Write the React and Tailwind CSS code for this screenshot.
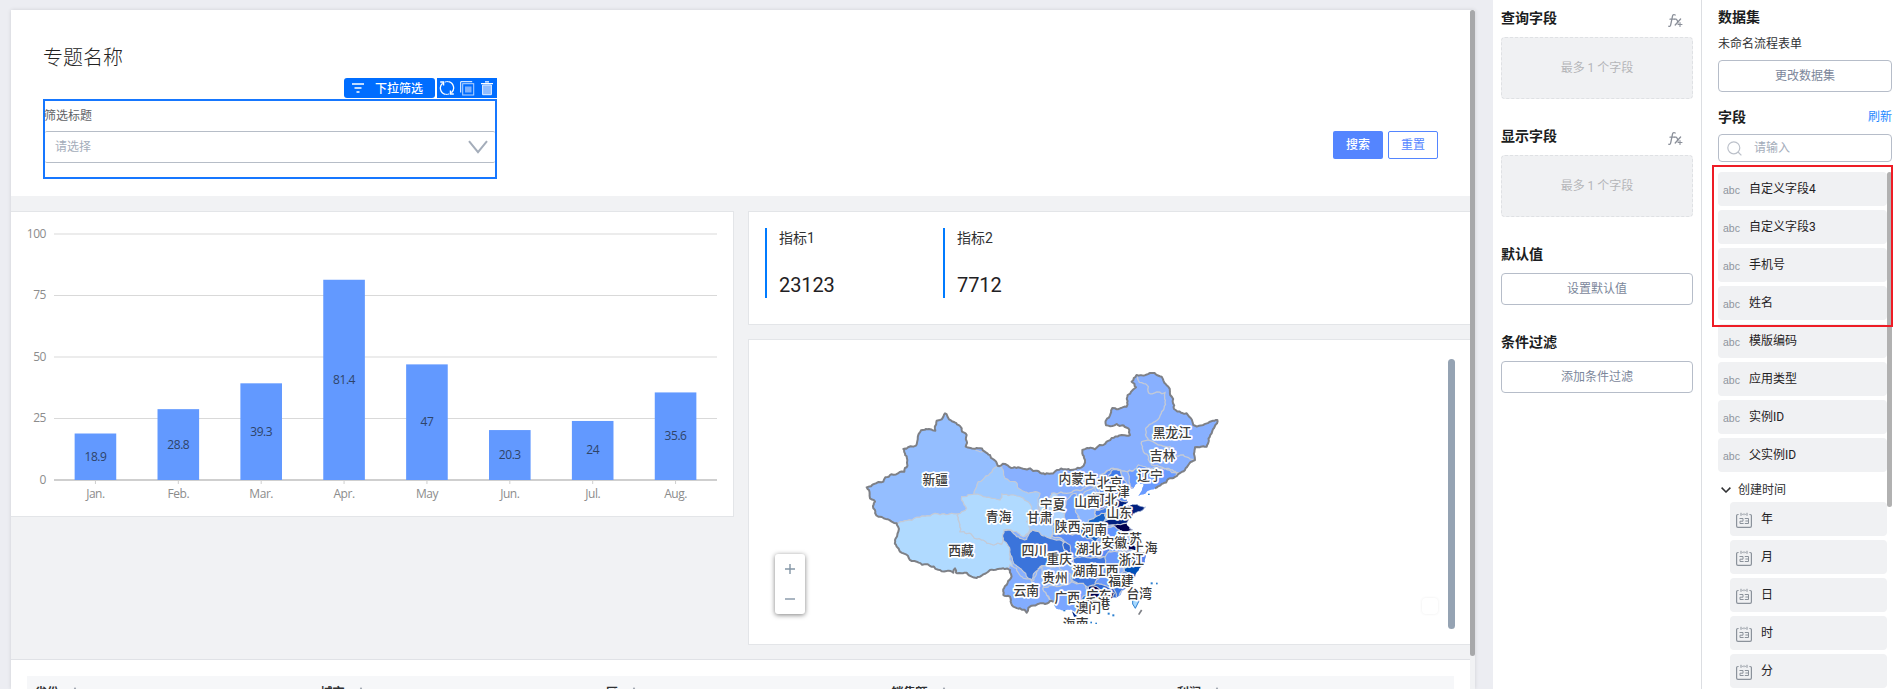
import React from "react";

/* ---------- chart ---------- */
const CHART = [
  ["Jan.", 18.9],
  ["Feb.", 28.8],
  ["Mar.", 39.3],
  ["Apr.", 81.4],
  ["May", 47],
  ["Jun.", 20.3],
  ["Jul.", 24],
  ["Aug.", 35.6],
];

function BarChart() {
  const left = 43;
  const right = 706;
  const zero = 268;
  const unit = 2.46;
  const step = (right - left) / CHART.length;
  return (
    <svg width="722" height="304" viewBox="0 0 722 304" className="block font-['Open_Sans','Noto_Sans',sans-serif] text-[12px] tracking-[-0.45px]">
      {[100, 75, 50, 25].map((v) => (
        <g key={v}>
          <line x1={left} x2={right} y1={zero - v * unit} y2={zero - v * unit} stroke="#d9d9d9" strokeWidth="1" />
        </g>
      ))}
      <line x1={left} x2={right} y1={zero} y2={zero} stroke="#cfcfcf" strokeWidth="2" />
      {[0, 25, 50, 75, 100].map((v) => (
        <text key={v} x="35" y={zero - v * unit + 3.5} textAnchor="end" fill="#8c8c8c">
          {v}
        </text>
      ))}
      {CHART.map(([m, v], i) => {
        const cx = left + step * (i + 0.5);
        return (
          <g key={m}>
            <line x1={cx} x2={cx} y1={zero} y2={zero + 4} stroke="#cfcfcf" />
            <rect x={cx - 20.8} y={zero - v * unit} width="41.6" height={v * unit} fill="#6299ff" />
            <text x={cx} y={zero - (v * unit) / 2 + 4} textAnchor="middle" fill="#2f4468">
              {v}
            </text>
            <text x={cx} y={zero + 18} textAnchor="middle" fill="#8c8c8c">
              {m}
            </text>
          </g>
        );
      })}
    </svg>
  );
}

/* ---------- map ---------- */
const hash = (x, y) => {
  const s = Math.sin(x * 12.9898 + y * 78.233) * 43758.5453;
  return (s - Math.floor(s)) * 2 - 1;
};

/* Midpoint displacement, independent of direction so that shared borders coincide. */
function subdivide(a, b, out) {
  const len = Math.hypot(b[0] - a[0], b[1] - a[1]);
  if (len < 9) {
    out.push(b);
    return;
  }
  const mx = (a[0] + b[0]) / 2;
  const my = (a[1] + b[1]) / 2;
  const k = Math.min(len * 0.18, 5);
  const m = [mx + hash(mx, my) * k, my + hash(my, mx) * k];
  subdivide(a, m, out);
  subdivide(m, b, out);
}

function rough(str, closed = true) {
  const pts = str.split(" ").map((p) => p.split(",").map(Number));
  const out = [pts[0]];
  for (let i = 1; i < pts.length; i++) subdivide(pts[i - 1], pts[i], out);
  if (closed) subdivide(pts[pts.length - 1], pts[0], out);
  return "M" + out.map((p) => p[0].toFixed(1) + "," + p[1].toFixed(1)).join("L") + (closed ? "Z" : "");
}

const LAND =
  "612,756 600,753 585,762 570,760 540,770 530,788 510,775 490,770 480,740 460,735 462,715 478,690 480,660 460,655 430,660 420,660 390,680 365,680 350,668 318,668 315,655 310,668 270,660 240,648 200,635 160,610 140,590 135,570 145,545 140,520 125,515 85,500 70,475 75,455 60,445 50,412 75,401 100,395 120,375 163,365 172,330 160,297 198,287 213,241 256,242 260,212 275,208 285,190 297,208 330,228 350,255 347,290 380,294 420,315 443,347 500,354 540,355 585,373 640,358 695,352 705,330 697,300 712,294 735,298 760,285 785,264 815,255 840,255 835,235 800,222 768,226 787,174 800,178 830,170 833,135 858,112 845,95 860,75 900,69 935,80 955,110 972,177 1010,190 1030,225 1060,225 1080,215 1102,210 1085,250 1070,290 1035,292 1035,330 1015,345 1005,360 985,372 960,385 940,400 915,415";
const COAST =
  " 890,425 865,438 880,402 865,395 850,415 835,415 825,440 835,455 820,470 850,463 888,470 870,485 850,492 830,520 850,540 855,575 875,600 888,615 885,640 868,655 852,685 830,712 800,742 775,750 740,748 700,765 685,790 670,783 625,778";

const PROVINCES = [
  ["#94beff", "443,347 420,370 385,395 372,432 335,440 350,475 325,492 250,492 200,502 165,512 140,520 20,540 20,180 300,170 360,260 347,290 420,315"],
  ["#b0daff", "140,520 165,512 200,502 250,492 325,492 330,545 370,560 430,585 455,582 462,560 480,600 487,650 480,700 300,720 100,620"],
  ["#9fcaff", "443,347 455,350 465,385 495,395 505,415 535,430 570,430 565,460 575,500 605,520 605,560 575,565 550,540 520,560 480,500 372,432 385,395 420,370"],
  ["#b0daff", "335,440 372,432 450,450 455,432 500,438 545,470 550,490 530,515 540,535 520,560 490,545 465,540 462,560 455,582 430,585 370,560 330,545 325,492 350,475"],
  ["#b0d5ff", "570,450 600,445 605,430 620,432 620,480 645,490 640,515 600,515 575,490"],
  ["#6f9ffb", "605,560 605,520 645,510 650,450 678,430 683,500 690,530 680,560 640,550"],
  ["#8ab5ff", "683,440 735,405 745,440 735,520 690,520 680,490"],
  ["#5b8df3", "750,375 790,355 812,362 830,400 835,460 765,500 740,500"],
  ["#3f7ae8", "775,378 792,358 812,360 815,385 790,392"],
  ["#3f7ae8", "735,480 765,470 765,500 740,510"],
  ["#1663c8", "722,508 765,490 760,525 735,545 750,560 740,585 690,562 700,530"],
  ["#012180", "760,515 780,503 800,450 830,455 850,463 888,470 870,485 850,492 830,520 800,525 780,525"],
  ["#01004f", "785,528 830,520 860,545 820,548 800,540"],
  ["#6296ff", "760,530 790,528 835,560 835,595 790,610 755,585"],
  ["#01004f", "835,580 860,585 865,600 835,600"],
  ["#5b8cf5", "605,555 680,552 750,575 780,600 770,625 670,625 640,570"],
  ["#3268d2", "645,575 660,585 665,620 650,640 630,650 600,650 620,620"],
  ["#3b74db", "462,540 475,540 500,560 530,568 547,540 575,556 600,565 640,575 645,600 620,620 600,650 570,650 545,690 530,680 510,655 490,640 480,600 460,565"],
  ["#3f77df", "668,625 760,620 800,625 800,650 740,690 735,715 690,710 665,690 672,650"],
  ["#6998fb", "775,605 830,600 810,650 800,690 760,720 735,712 740,690 765,650"],
  ["#5286ef", "805,605 890,600 895,640 820,660"],
  ["#0050b8", "822,655 880,645 850,690 820,672"],
  ["#3e79e4", "780,690 822,665 860,690 800,750 785,725"],
  ["#8fb8ff", "575,650 625,648 662,672 665,695 620,710 580,712 560,690"],
  ["#83adff", "480,645 500,655 520,685 545,695 560,665 575,650 580,712 590,735 612,756 530,800 440,740 470,690"],
  ["#7aa6ff", "580,712 620,710 665,695 700,700 715,725 685,800 620,800 610,760 590,735"],
  ["#2c66d4", "715,715 745,700 790,715 800,745 740,760 690,770"],
  ["#01004f", "715,712 740,710 775,725 745,750 718,742"],
  ["#01004f", "785,725 793,730 790,748 782,745"],
  ["#6a9bff", "833,365 850,362 865,345 925,355 990,370 950,410 862,445 840,410"],
];

const INNER = [
  "862,80 875,98 895,110 897,130 945,128 935,185 915,215 887,240 895,270 875,275 880,305 895,318",
  "895,270 925,285 960,290 975,320 1000,315 1035,330",
  "895,318 905,345 930,350 985,372",
  "620,432 650,430 700,415 745,402 750,375 790,355 812,362 833,365 850,362",
];

const LABELS = [
  ["黑龙江", 966, 246],
  ["吉林", 938, 316],
  ["辽宁", 900, 374],
  ["新疆", 256, 387],
  ["西藏", 333, 601],
  ["北京", 780, 395],
  ["天津", 801, 424],
  ["河北", 764, 448],
  ["内蒙古", 683, 383],
  ["山西", 711, 452],
  ["宁夏", 608, 461],
  ["甘肃", 569, 500],
  ["青海", 446, 499],
  ["山东", 808, 485],
  ["陕西", 653, 528],
  ["江苏", 838, 564],
  ["河南", 733, 538],
  ["上海", 884, 590],
  ["安徽", 793, 577],
  ["湖北", 716, 595],
  ["四川", 553, 601],
  ["重庆", 628, 623],
  ["浙江", 844, 627],
  ["江西", 767, 659],
  ["湖南", 706, 659],
  ["福建", 813, 690],
  ["贵州", 615, 680],
  ["云南", 529, 719],
  ["台湾", 868, 728],
  ["广西", 652, 741],
  ["广东", 746, 734],
  ["香港", 742, 760],
  ["澳门", 715, 770],
  ["海南", 677, 820],
];

function ChinaMap() {
  return (
    <svg width="400" height="274" viewBox="0 0 1200 822" className="block overflow-hidden font-['Noto_Sans_CJK_SC',sans-serif] text-[38.4px] font-medium">
      <defs>
        <clipPath id="land">
          <path d={rough(LAND + COAST)} />
        </clipPath>
      </defs>
      <path d={rough(LAND + COAST)} fill="#88b0ff" />
      <g clipPath="url(#land)">
        {PROVINCES.map(([c, p], i) => (
          <path key={i} d={rough(p)} fill={c} stroke="#c4cad6" strokeWidth="3.5" />
        ))}
        {INNER.map((p) => (
          <path key={p} d={rough(p, false)} fill="none" stroke="#c4cad6" strokeWidth="4" />
        ))}
      </g>
      <path d={rough(LAND, false)} fill="none" stroke="#7e8086" strokeWidth="6" strokeLinejoin="round" />
      <path d="M848,750L858,748L866,742L866,755L856,775L848,762Z" fill="#a6d8ff" stroke="#2b7fd0" strokeWidth="3" />
      <path d="M875,780L866,794" stroke="#7e8086" strokeWidth="5" />
      <path d="M666,784L684,800L672,800Z" fill="#012180" />
      <g fill="#2b7fd0">
        <rect x="902" y="697" width="6" height="6" />
        <rect x="918" y="698" width="5" height="5" />
        <rect x="894" y="431" width="5" height="4" />
        <rect x="773" y="788" width="6" height="6" />
        <rect x="787" y="793" width="6" height="6" />
        <rect x="721" y="815" width="5" height="5" />
        <rect x="736" y="818" width="5" height="4" />
        <rect x="640" y="780" width="6" height="4" />
      </g>
      {LABELS.map(([t, x, y]) => (
        <text key={t} x={x} y={y + 15} textAnchor="middle" fill="#3c3c3c" stroke="#fff" strokeWidth="10" strokeLinejoin="round" paintOrder="stroke">
          {t}
        </text>
      ))}
    </svg>
  );
}

/* ---------- icons ---------- */
function FxIcon() {
  return (
    <svg width="15" height="16" viewBox="0 0 15 16" fill="none" stroke="#8a8f99" strokeWidth="1.3" strokeLinecap="round">
      <path d="M7.2 2C5.6 1 4.7 2 4.4 3.6L2.8 11.4C2.5 13 1.8 13.8.8 13.3M2 6.2h4.6" />
      <path d="M7 6.2c1.2-.5 1.8.2 2.2 1.4l1 2.4M12.6 6L7.2 12" />
      <path d="M12 9.5v4M10 11.5h4" strokeWidth="1.1" />
    </svg>
  );
}

function CalendarIcon() {
  return (
    <svg width="16" height="16" viewBox="0 0 16 16" fill="none" stroke="#8b929b" strokeWidth="1">
      <path d="M2.6 2.5H2A1.4 1.4 0 0 0 .6 4v10A1.4 1.4 0 0 0 2 15.4h12a1.4 1.4 0 0 0 1.4-1.4V4A1.4 1.4 0 0 0 14 2.5h-.6" strokeWidth="1.2" />
      <path d="M5 .8v3M8 1.4v1.8M11 .8v3M6.2 2.4h.7M9.2 2.4h.7" />
      <path d="M3.5 6.5h3.5v2.7h-3v2.3h3.6M8.8 6.5h3.7v5H8.8M9.4 9h3" />
    </svg>
  );
}

/* ---------- side panels ---------- */
function DropZone({ title }) {
  return (
    <section className="h-[118px]">
      <div className="flex h-[37px] items-center justify-between pr-[10px]">
        <h3 className="-mt-[2px] text-sm font-bold text-[#1b1d21]">{title}</h3>
        <span className="mt-[5px]"><FxIcon /></span>
      </div>
      <div className="flex h-[62px] items-center justify-center rounded border border-dashed border-[#dfe1e4] bg-[#f0f1f3] text-xs text-[#b5b6b9]">
        最多 1 个字段
      </div>
    </section>
  );
}

function OutlineButton({ children }) {
  return (
    <button className="flex h-8 w-full items-center justify-center rounded border border-[#b6bdc9] bg-white text-xs text-[#7c879b]">
      {children}
    </button>
  );
}

const FIELDS = ["自定义字段4", "自定义字段3", "手机号", "姓名", "模版编码", "应用类型", "实例ID", "父实例ID"];
const COLUMNS = ["省份", "城市", "区", "销售额", "利润"];

export default function App() {
  return (
    <div className="flex h-[689px] w-[1900px] overflow-hidden bg-[#ecedf2] font-[Roboto,'Noto_Sans_CJK_SC',sans-serif] text-[#303133]">
      {/* canvas */}
      <main className="relative ml-[11px] mt-[10px] flex h-[679px] w-[1464px] flex-col overflow-hidden bg-[#f1f2f4] pr-[5px] shadow-[0_0_4px_rgba(0,0,0,0.12)]">
        <section className="h-[186px] shrink-0 bg-white px-8 pt-[32px]">
          <h1 className="h-[30px] pt-px text-xl leading-[30px] font-light text-[#222]">专题名称</h1>
          <div className="mt-[6px] flex h-5 w-[454px] justify-end gap-[2px]">
            <div className="flex w-[91px] items-center rounded-[3px] bg-[#006dff] pl-2 text-xs font-bold text-white">
              <svg width="12" height="10" viewBox="0 0 12 10" stroke="#fff" strokeWidth="1.4">
                <path d="M0 1h12M2.5 5h7M4.5 9h3" />
              </svg>
              <span className="ml-[11px] pt-px leading-5 font-medium">下拉筛选</span>
            </div>
            <div className="flex w-[60px] items-center bg-[#006dff] pl-[2px]">
              <svg width="16" height="16" viewBox="0 0 16 16" fill="none" stroke="#fff" strokeWidth="1.3">
                <path d="M6.4 14.3A6.4 6.4 0 0 1 3.6 3.2M1.2 2h3.4v3.4" />
                <path d="M9.600 1.700A6.4 6.4 0 0 1 12.4 12.8M14.8 14h-3.400v-3.400" />
                <path d="M5.800 2.100A6.400 6.400 0 0 1 9.600 1.700M10.200 13.900A6.400 6.400 0 0 1 6.400 14.300" strokeWidth="1" />
              </svg>
              <svg width="15" height="15" viewBox="0 0 15 15" fill="none" stroke="#fff" className="ml-[5px]">
                <path d="M.7 11.5V.7h11.5" />
                <rect x="2.7" y="2.7" width="11" height="11.3" stroke="#b8d5ff" />
                <rect x="5" y="5.5" width="6.5" height="6" fill="#7db1ff" stroke="none" />
              </svg>
              <svg width="12" height="15" viewBox="0 0 12 15" fill="none" className="ml-[6px]">
                <path d="M0 2.6h12M4 .8h4" stroke="#fff" strokeWidth="1.2" />
                <path d="M1.6 4h8.8v9.7H1.6z" fill="#8fbcff" stroke="#e4efff" />
              </svg>
            </div>
          </div>
          <div className="mt-[1px] flex h-20 w-[454px] flex-col border-2 border-[#1677ff] bg-white">
            <label className="-ml-px h-[30px] pt-px text-xs leading-[29px] text-[#606266]">筛选标题</label>
            <div className="flex h-8 items-center justify-between rounded-[2px] border-y border-[#b6bdc7] pr-[7px] pl-[10px] text-xs text-[#a4adba]">
              请选择
              <svg width="20" height="14" viewBox="0 0 20 14" fill="none" stroke="#a4adba" strokeWidth="2">
                <path d="M1 1.2l9 11 9-11" />
              </svg>
            </div>
          </div>
          <div className="-mt-12 flex h-7 justify-end gap-[5px] text-xs">
            <button className="w-[50px] rounded-[2px] bg-[#5485ff] font-medium text-white">搜索</button>
            <button className="w-[50px] rounded-[2px] border border-[#5485ff] bg-white text-[#5485ff]">重置</button>
          </div>
        </section>

        <div className="mt-[15px] flex h-[434px] shrink-0 gap-[14px]">
          <section className="h-[306px] w-[723px] shrink-0 border-y border-r border-[#e3e5e8] bg-white">
            <BarChart />
          </section>

          <div className="flex flex-1 flex-col gap-[14px]">
            <section className="flex h-[114px] border border-r-0 border-[#e3e5e8] bg-white pt-4 pl-4">
              {[["指标1", "23123"], ["指标2", "7712"]].map(([k, v]) => (
                <div key={k} className="flex h-[70px] w-[178px] flex-col border-l-2 border-[#007bff] pl-3">
                  <span className="text-sm leading-5">{k}</span>
                  <span className="mt-[25px] text-xl leading-6 tracking-[-0.1px] text-[#1f2124]">{v}</span>
                </div>
              ))}
            </section>
            <section className="flex h-[306px] items-start border border-r-0 border-[#e3e5e8] bg-white">
              <div className="mt-[214px] ml-[26px] flex h-[60px] w-[30px] flex-col rounded-[3px] bg-white shadow-[0_1px_5px_rgba(0,0,0,0.5)]">
                {["M5 0v10M0 5h10", "M0 5h10"].map((d) => (
                  <button key={d} className="flex h-[30px] items-center justify-center">
                    <svg width="10" height="10" viewBox="0 0 10 10" stroke="#8496a6" strokeWidth="1.4">
                      <path d={d} />
                    </svg>
                  </button>
                ))}
              </div>
              <div className="mt-[10px] ml-[45px]">
                <ChinaMap />
              </div>
              <div className="mt-[258px] ml-[172px] h-4 w-4 rounded-[4px] bg-white shadow-[0_0_3px_rgba(0,0,0,0.08)]" />
              <div className="mt-[19px] ml-[10px] h-[270px] w-[7px] rounded-full bg-[#95a3b3]" />
            </section>
          </div>
        </div>

        <section className="mt-[14px] h-[100px] shrink-0 border-t border-[#e0e2e6] bg-white px-4 pt-4">
          <div className="flex h-[50px] bg-[#f6f7f9] pt-2 pl-2">
            {COLUMNS.map((c) => (
              <div key={c} className="flex w-[285.5px] shrink-0 items-start text-xs leading-[18px] font-bold">
                {c}
                <svg width="6" height="5" viewBox="0 0 6 5" className="mt-[3px] ml-[13px]">
                  <path d="M3 0l3 5H0z" fill="#9aa1aa" />
                </svg>
              </div>
            ))}
          </div>
        </section>

        <div className="absolute top-0 right-0 h-[646px] w-[5px] rounded-full bg-[#a7a8aa]" />
        <div className="absolute right-0 bottom-0 h-[33px] w-[5px] bg-[#f1f2f4]" />
      </main>

      {/* field settings */}
      <aside className="ml-[18px] w-[209px] border-r border-[#dcdee2] bg-white pr-2 pl-2">
        <DropZone title="查询字段" />
        <DropZone title="显示字段" />
        <h3 className="flex h-[37px] items-center pb-[2px] text-sm font-bold text-[#1b1d21]">默认值</h3>
        <OutlineButton>设置默认值</OutlineButton>
        <h3 className="mt-[19px] flex h-[37px] items-center pb-px text-sm font-bold text-[#1b1d21]">条件过滤</h3>
        <OutlineButton>添加条件过滤</OutlineButton>
      </aside>

      {/* data set */}
      <aside className="relative flex-1 bg-white pr-2 pl-4">
        <h3 className="flex h-[34px] items-center text-sm font-bold text-[#1b1d21]">数据集</h3>
        <p className="h-[26px] pt-px text-xs leading-[19px] text-[#303133]">未命名流程表单</p>
        <OutlineButton>更改数据集</OutlineButton>
        <div className="mt-[15px] flex h-[27px] items-start justify-between">
          <h3 className="text-sm leading-5 font-bold text-[#1b1d21]">字段</h3>
          <a className="text-xs leading-5 text-[#1e88ff]">刷新</a>
        </div>
        <div className="flex h-7 items-center gap-[12px] rounded border border-[#b6bdc9] pl-2 text-xs text-[#a4adba]">
          <svg width="15" height="15" viewBox="0 0 15 15" fill="none" stroke="#bcc1ca" strokeWidth="1.2">
            <circle cx="6.8" cy="6.8" r="6" />
            <path d="M11 11l3.4 3.4" />
          </svg>
          请输入
        </div>
        <div className="mt-[10px] flex">
          <div className="w-[169px]">
            {FIELDS.map((f) => (
              <div key={f} className="mb-1 flex h-[34px] items-center rounded-[4px] bg-[#f0f1f3] pl-[5px] text-xs text-[#1f2124]">
                <span className="w-[26px] pt-px font-['Liberation_Sans'] text-[10.5px] text-[#8f959e]">abc</span>
                {f}
              </div>
            ))}
            <div className="flex h-[26px] items-center pt-[1px] pl-[3px] text-xs text-[#303133]">
              <svg width="10" height="6" viewBox="0 0 10 6" fill="none" stroke="#303133" strokeWidth="1.5" className="mr-[7px]">
                <path d="M.6.6L5 5 9.4.6" />
              </svg>
              创建时间
            </div>
            {["年", "月", "日", "时", "分"].map((f) => (
              <div key={f} className="mb-1 ml-3 flex h-[34px] items-center gap-[9px] rounded-[4px] bg-[#f0f1f3] pl-[6px] text-xs text-[#1f2124]">
                <span className="pt-[2px]"><CalendarIcon /></span>
                <span>{f}</span>
              </div>
            ))}
          </div>
          <div className="h-[335px] w-[5px] rounded-full bg-[#b1b1b1]" />
        </div>
        <div className="pointer-events-none absolute top-[165px] right-[7px] h-[162px] w-[181px] border-2 border-[#ee1c25]" />
      </aside>
    </div>
  );
}
